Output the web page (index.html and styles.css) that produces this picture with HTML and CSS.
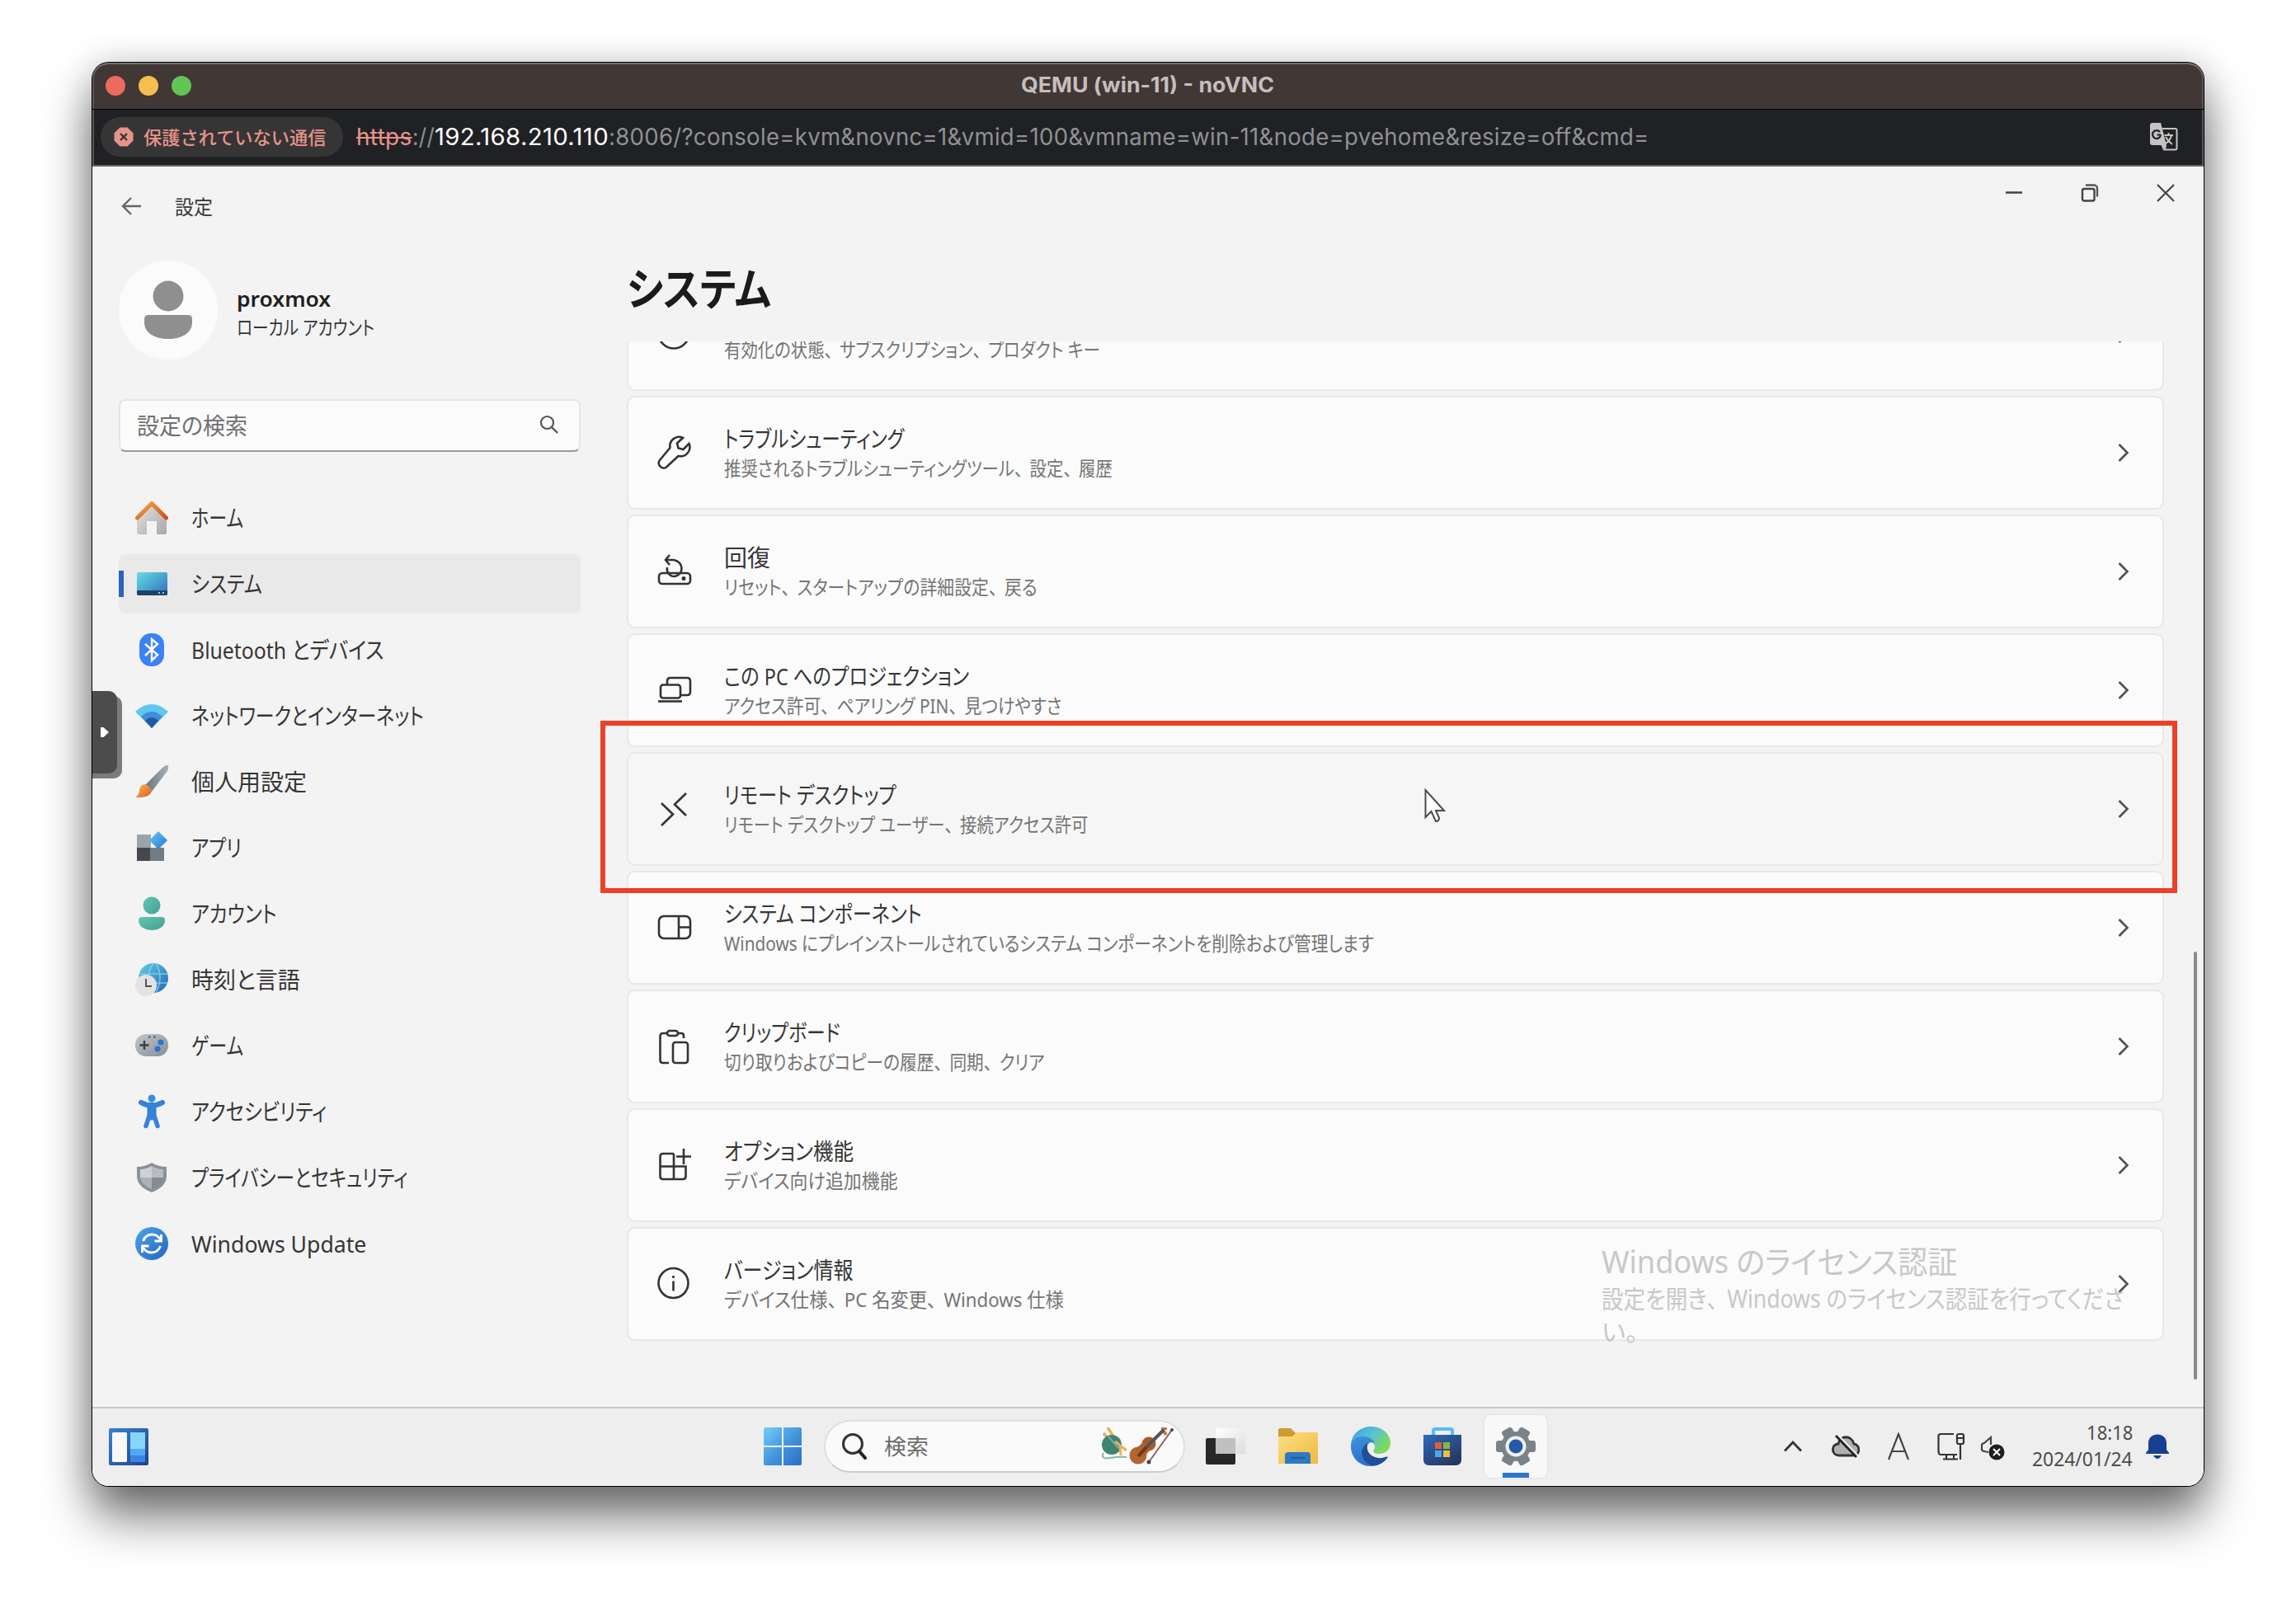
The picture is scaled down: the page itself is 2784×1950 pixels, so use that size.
FILE: index.html
```html
<!DOCTYPE html>
<html lang="ja">
<head>
<meta charset="utf-8">
<title>QEMU (win-11) - noVNC</title>
<link rel="stylesheet" href="styles.css">
</head>
<body>
<div class="window">
  <header class="titlebar">
    <span class="lights"><i class="red"></i><i class="yellow"></i><i class="green"></i></span>
    <span class="window-title"><span class="fit" data-w="307">QEMU (win-11) - noVNC</span></span>
  </header>
  <div class="address">
    <span class="warn">
      <svg width="24" height="24" viewBox="0 0 24 24"><path d="M7.5 0.5h9l7 7v9l-7 7h-9l-7-7v-9z" fill="#e8938a"/><path d="M8 8l8 8M16 8l-8 8" stroke="#353535" stroke-width="2.4"/></svg>
      <span class="fit" data-w="221">保護されていない通信</span>
    </span>
    <span class="url"><span class="seg s1"><span class="fit strike" data-w="68">https</span></span><span class="seg s2"><span class="fit" data-w="27">://</span></span><span class="seg s3"><span class="fit host" data-w="211">192.168.210.110</span></span><span class="seg"><span class="fit" data-w="1262">:8006/?console=kvm&amp;novnc=1&amp;vmid=100&amp;vmname=win-11&amp;node=pvehome&amp;resize=off&amp;cmd=</span></span></span>
    <svg class="translate" width="34" height="34" viewBox="0 0 34 34"><path d="M15 7h15.500a2 2 0 0 1 2 2v21.500a2 2 0 0 1-2 2H17l-3-7" fill="none" stroke="#c4c4c4" stroke-width="2"/><path d="M3 0h10l7 27-1 6-4-6H3a3 3 0 0 1-3-3V3a3 3 0 0 1 3-3z" fill="#c4c4c4"/><path d="M13 14.500H8.500M12 11a5 5 0 1 0 1 3.500" fill="none" stroke="#202124" stroke-width="2.200"/><path d="M17.500 15H28M22.500 12v3M26 15c-1 5-4 8-7 10M19 17c2 4 5 7 8 9" fill="none" stroke="#c4c4c4" stroke-width="2"/></svg>
  </div>

  <div class="remote">
    <section class="app">
      <div class="app-bar">
        <svg class="back" width="24" height="22" viewBox="0 0 24 22"><path d="M12 1L2 11l10 10M2 11h22" fill="none" stroke="#666" stroke-width="2.400"/></svg>
        <span class="fit app-name" data-w="46">設定</span>
        <span class="win-buttons">
          <span><svg width="22" height="22" viewBox="0 0 22 22"><path d="M1 10.500h20" stroke="#444" stroke-width="2.400"/></svg></span>
          <span><svg width="22" height="22" viewBox="0 0 22 22"><rect x="2" y="6" width="14.500" height="14.500" rx="2" fill="none" stroke="#444" stroke-width="2.400"/><path d="M6 1.500h10a4 4 0 0 1 4 4v10" fill="none" stroke="#555" stroke-width="2.400"/></svg></span>
          <span><svg width="22" height="22" viewBox="0 0 22 22"><path d="M1 1l20 20M21 1L1 21" stroke="#444" stroke-width="2.200"/></svg></span>
        </span>
      </div>
      <div class="app-body">
        <aside class="side">
          <div class="profile">
            <span class="avatar"><svg width="60" height="72" viewBox="0 0 60 72"><circle cx="30" cy="19" r="18.500" fill="#8f8f8f"/><path d="M6 42h48q5 0 5 5v4c0 13-13 20-29 20S1 64 1 51v-4q0-5 5-5z" fill="#8f8f8f"/></svg></span>
            <span class="who"><b><span class="fit" data-w="114">proxmox</span></b><small><span class="fit" data-w="167">ローカル アカウント</span></small></span>
          </div>
          <div class="search"><span class="fit" data-w="134">設定の検索</span><svg width="24" height="24" viewBox="0 0 24 24"><circle cx="9.500" cy="9.500" r="7.500" fill="none" stroke="#555" stroke-width="2.200"/><path d="M15 15l7 7" stroke="#555" stroke-width="2.400"/></svg></div>
          <nav class="nav">
            <div class="item"><svg width="40" height="42" viewBox="0 0 40 42"><defs><linearGradient id="g1" x1="0" y1="0" x2="1" y2="1"><stop offset="0" stop-color="#e4e4e4"/><stop offset="1" stop-color="#a8a8a8"/></linearGradient><linearGradient id="g2" x1="0" y1="0" x2="1" y2="1"><stop offset="0" stop-color="#f4a93d"/><stop offset="1" stop-color="#cf4d21"/></linearGradient></defs><path d="M2 20L20 4l18 16v19q0 2-2 2h-10V25H14v16H4q-2 0-2-2z" fill="url(#g1)"/><path d="M2.500 21L20 3.500 37.500 21" fill="none" stroke="url(#g2)" stroke-width="5" stroke-linecap="round" stroke-linejoin="round"/></svg><span class="fit" data-w="63">ホーム</span></div>
            <div class="item on"><svg width="40" height="42" viewBox="0 0 40 42"><defs><linearGradient id="g3" x1="0" y1="0" x2="1" y2="1"><stop offset="0" stop-color="#69dbe2"/><stop offset="1" stop-color="#2c6fbd"/></linearGradient></defs><rect x="2" y="7" width="37" height="28" rx="2" fill="url(#g3)"/><path d="M2 29h37v4q0 2-2 2H4q-2 0-2-2z" fill="#1c4565"/><path d="M28 32h2M33 32h2" stroke="#8fd0e6" stroke-width="2"/></svg><span class="fit" data-w="86">システム</span></div>
            <div class="item"><svg width="40" height="42" viewBox="0 0 40 42"><rect x="5" y="1" width="30" height="40" rx="14" fill="#3b82f6"/><path d="M12 14l15 13-7 7V8l7 6-15 14" fill="none" stroke="#fff" stroke-width="2.400"/></svg><span class="fit" data-w="234">Bluetooth とデバイス</span></div>
            <div class="item"><svg width="40" height="42" viewBox="0 0 40 42"><path d="M0 16Q20-2 40 16L20 36z" fill="#5fc6ef"/><path d="M7 22Q20 10 33 22L20 36z" fill="#3f8fd8"/><path d="M12 27Q20 19 28 27L20 36z" fill="#2459a5"/></svg><span class="fit" data-w="282">ネットワークとインターネット</span></div>
            <div class="item"><svg width="40" height="42" viewBox="0 0 40 42"><defs><linearGradient id="g4" x1="0" y1="0" x2="1" y2="0"><stop offset="0" stop-color="#6c757d"/><stop offset="1" stop-color="#a9b1b9"/></linearGradient><linearGradient id="g5" x1="0" y1="0" x2="1" y2="1"><stop offset="0" stop-color="#fbbd4a"/><stop offset="1" stop-color="#dc5a2a"/></linearGradient></defs><path d="M12 25L33 4q5-4 7-3t-1 7L20 33z" fill="url(#g4)"/><path d="M11 24q6 1 9 8-2 9-20 8 5-3 5-9 1-6 6-7z" fill="url(#g5)"/></svg><span class="fit" data-w="140">個人用設定</span></div>
            <div class="item"><svg width="40" height="42" viewBox="0 0 40 42"><defs><linearGradient id="g6" x1="0" y1="0" x2="1" y2="1"><stop offset="0" stop-color="#6bcaf5"/><stop offset="1" stop-color="#2475cf"/></linearGradient></defs><path d="M2 5h17v17H2z" fill="#9ca3ab"/><path d="M2 21h17v16H2z" fill="#45494e"/><path d="M18 21h17v16H18z" fill="#747b83"/><path d="M28 1L39 12 28 23 17 12z" fill="url(#g6)"/></svg><span class="fit" data-w="61">アプリ</span></div>
            <div class="item"><svg width="40" height="42" viewBox="0 0 40 42"><defs><linearGradient id="g7" x1="0" y1="0" x2="1" y2="1"><stop offset="0" stop-color="#60c8b4"/><stop offset="1" stop-color="#459f90"/></linearGradient></defs><circle cx="20" cy="11" r="10.500" fill="url(#g7)"/><path d="M8 25h24q4 0 4 4c0 8-8 12-16 12S4 37 4 29q0-4 4-4z" fill="url(#g7)"/></svg><span class="fit" data-w="104">アカウント</span></div>
            <div class="item"><svg width="40" height="42" viewBox="0 0 40 42"><defs><linearGradient id="g8" x1="0" y1="0" x2="1" y2="1"><stop offset="0" stop-color="#63cfe0"/><stop offset="1" stop-color="#2467ba"/></linearGradient></defs><circle cx="22" cy="19" r="18" fill="url(#g8)"/><path d="M5 14h34M8 25h31M22 1q-12 17 0 36M25 1q10 17 0 36" fill="none" stroke="#8fe0ec" stroke-width="1.500" opacity=".7"/><circle cx="13" cy="28" r="13" fill="#e2e2e5"/><path d="M13 20v9h7" fill="none" stroke="#555" stroke-width="2"/></svg><span class="fit" data-w="132">時刻と言語</span></div>
            <div class="item"><svg width="40" height="42" viewBox="0 0 40 42"><defs><linearGradient id="g9" x1="0" y1="0" x2="1" y2="1"><stop offset="0" stop-color="#c3c7cc"/><stop offset="1" stop-color="#878d96"/></linearGradient></defs><rect y="7" width="40" height="27" rx="13" fill="url(#g9)"/><path d="M11 15v11M5.500 20.500h11" stroke="#3b3f44" stroke-width="2.400"/><circle cx="31" cy="17" r="3.600" fill="#2b74cf"/><circle cx="27" cy="25" r="3.600" fill="#2b74cf"/><path d="M16 10.500h2.500M22 10.500h2.500" stroke="#555" stroke-width="2"/></svg><span class="fit" data-w="63">ゲーム</span></div>
            <div class="item"><svg width="40" height="42" viewBox="0 0 40 42"><g fill="none" stroke="#3583d6" stroke-linecap="round" stroke-linejoin="round"><path d="M7 10q13 7 26 0" stroke-width="6"/><path d="M20 15v11" stroke-width="11"/><path d="M17 26l-4 12.500M23 26l4 12.500" stroke-width="5.500"/></g><circle cx="20" cy="5" r="4.500" fill="#3a8fdc"/></svg><span class="fit" data-w="164">アクセシビリティ</span></div>
            <div class="item"><svg width="40" height="42" viewBox="0 0 40 42"><path d="M20 3q8 5 18 5v11q0 13-18 20Q2 32 2 19V8q10 0 18-5z" fill="#8b9097"/><path d="M20 7q7 4 14 4v10H20z" fill="#b8bcc2"/><path d="M20 7q-7 4-14 4v10h14z" fill="#cdd1d5"/><path d="M6 21h14v14Q7 30 6 21z" fill="#adb1b7"/><path d="M34 21H20v14q13-5 14-14z" fill="#858b93"/></svg><span class="fit" data-w="263">プライバシーとセキュリティ</span></div>
            <div class="item"><svg width="40" height="42" viewBox="0 0 40 42"><defs><linearGradient id="g10" x1="0" y1="0" x2="1" y2="1"><stop offset="0" stop-color="#4da3e2"/><stop offset="1" stop-color="#2566c8"/></linearGradient></defs><circle cx="20" cy="21" r="20" fill="url(#g10)"/><path d="M9.500 18q3-8 11-8 6 0 10 6M30.500 24q-3 8-11 8-6 0-10-6" fill="none" stroke="#fff" stroke-width="2.800"/><path d="M31.500 10v8h-8M8.500 32v-8h8" fill="none" stroke="#fff" stroke-width="2.800"/></svg><span class="fit" data-w="212">Windows Update</span></div>
          </nav>
        </aside>
        <main class="main">
          <h1><span class="fit" data-w="175">システム</span></h1>
          <div class="list">
            <div class="card first"><svg class="ic" width="44" height="44" viewBox="0 0 44 44"><circle cx="21" cy="21" r="18.500"/></svg><div class="txt"><b></b><small><span class="fit" data-w="456">有効化の状態<i>、</i>サブスクリプション<i>、</i>プロダクト キー</span></small></div><svg class="chev" width="14" height="24" viewBox="0 0 14 24"><path d="M1.500 2l10 10-10 10"/></svg></div>
            <div class="card"><svg class="ic" width="44" height="44" viewBox="0 0 44 44"><path d="M39.500 11l-7 7-6-1.500-1.500-6 7-6.500c-8-4-17 3-15.500 12L4 31c-4 5 3 12.500 8 8.500L26.500 26C36 28 43 19 39.500 11z"/></svg><div class="txt"><b><span class="fit" data-w="218">トラブルシューティング</span></b><small><span class="fit" data-w="471">推奨されるトラブルシューティングツール<i>、</i>設定<i>、</i>履歴</span></small></div><svg class="chev" width="14" height="24" viewBox="0 0 14 24"><path d="M1.500 2l10 10-10 10"/></svg></div>
            <div class="card"><svg class="ic" width="44" height="44" viewBox="0 0 44 44"><rect x="3" y="24" width="38" height="13" rx="4"/><path d="M16 2l-5 6 5 6M11 8h10c12 2 13 18 1 20-7 0-10-6-9-11"/><circle cx="33" cy="30.500" r="1.200"/></svg><div class="txt"><b><span class="fit" data-w="56">回復</span></b><small><span class="fit" data-w="380">リセット<i>、</i>スタートアップの詳細設定<i>、</i>戻る</span></small></div><svg class="chev" width="14" height="24" viewBox="0 0 14 24"><path d="M1.500 2l10 10-10 10"/></svg></div>
            <div class="card"><svg class="ic" width="44" height="44" viewBox="0 0 44 44"><path d="M13 15v-4q0-4 4-4h20q4 0 4 4v13q0 4-4 4h-7"/><rect x="5" y="15.500" width="24" height="16" rx="3"/><path d="M2 35.500h29"/></svg><div class="txt"><b><span class="fit" data-w="297">この PC へのプロジェクション</span></b><small><span class="fit" data-w="409">アクセス許可<i>、</i>ペアリング PIN<i>、</i>見つけやすさ</span></small></div><svg class="chev" width="14" height="24" viewBox="0 0 14 24"><path d="M1.500 2l10 10-10 10"/></svg></div>
            <div class="card hover"><svg class="ic" width="44" height="44" viewBox="0 0 44 44"><path d="M6 15l14 13.500L6 42M36 3L22 16.500 36 30"/></svg><div class="txt"><b><span class="fit" data-w="209">リモート デスクトップ</span></b><small><span class="fit" data-w="441">リモート デスクトップ ユーザー<i>、</i>接続アクセス許可</span></small></div><svg class="chev" width="14" height="24" viewBox="0 0 14 24"><path d="M1.500 2l10 10-10 10"/></svg></div>
            <div class="card"><svg class="ic" width="44" height="44" viewBox="0 0 44 44"><rect x="3" y="8" width="38" height="27" rx="6"/><path d="M27 8v27M27 21.500h14"/></svg><div class="txt"><b><span class="fit" data-w="240">システム コンポーネント</span></b><small><span class="fit" data-w="788">Windows にプレインストールされているシステム コンポーネントを削除および管理します</span></small></div><svg class="chev" width="14" height="24" viewBox="0 0 14 24"><path d="M1.500 2l10 10-10 10"/></svg></div>
            <div class="card"><svg class="ic" width="44" height="44" viewBox="0 0 44 44"><path d="M13 6H8Q4.500 6 4.500 9.500v29Q4.500 42 8 42h7M26 6h4q3 0 3 3v3"/><rect x="13" y="3" width="13" height="6" rx="3"/><rect x="20" y="17" width="18" height="25" rx="3"/></svg><div class="txt"><b><span class="fit" data-w="141">クリップボード</span></b><small><span class="fit" data-w="389">切り取りおよびコピーの履歴<i>、</i>同期<i>、</i>クリア</span></small></div><svg class="chev" width="14" height="24" viewBox="0 0 14 24"><path d="M1.500 2l10 10-10 10"/></svg></div>
            <div class="card"><svg class="ic" width="44" height="44" viewBox="0 0 44 44"><path d="M21 8H8Q4.500 8 4.500 11.500v24Q4.500 39 8 39h24q3.500 0 3.500-3.500V23.500h-31M21 8v31M33 2v19M24 11.500h18"/></svg><div class="txt"><b><span class="fit" data-w="157">オプション機能</span></b><small><span class="fit" data-w="211">デバイス向け追加機能</span></small></div><svg class="chev" width="14" height="24" viewBox="0 0 14 24"><path d="M1.500 2l10 10-10 10"/></svg></div>
            <div class="card"><svg class="ic" width="44" height="44" viewBox="0 0 44 44"><circle cx="20.500" cy="21" r="18"/><path d="M20.500 18.500v12M20.500 12v3"/></svg><div class="txt"><b><span class="fit" data-w="157">バージョン情報</span></b><small><span class="fit" data-w="412">デバイス仕様<i>、</i>PC 名変更<i>、</i>Windows 仕様</span></small></div><svg class="chev" width="14" height="24" viewBox="0 0 14 24"><path d="M1.500 2l10 10-10 10"/></svg></div>
          </div>
        </main>
      </div>
      <i class="scrollbar"></i>
    </section>

    <footer class="taskbar">
      <svg class="widgets" width="48" height="45" viewBox="0 0 48 45"><defs><linearGradient id="wd" x1="0" y1="0" x2="1" y2="1"><stop offset="0" stop-color="#3a80d8"/><stop offset="1" stop-color="#1f4485"/></linearGradient></defs><rect width="48" height="45" rx="2" fill="url(#wd)"/><rect x="4" y="5" width="18" height="36" rx="1.500" fill="#f8f8f8"/><path d="M26 5h18v20H26z" fill="#85d6fb"/><path d="M26 25h18v8H26z" fill="#53a8f7"/><path d="M26 33h18v8H26z" fill="#3a84e6"/></svg>
      <div class="dock">
        <svg class="start" width="46" height="46" viewBox="0 0 46 46"><defs><linearGradient id="w" gradientUnits="userSpaceOnUse" x1="0" y1="0" x2="46" y2="46"><stop offset="0" stop-color="#72cff8"/><stop offset=".5" stop-color="#4597dc"/><stop offset="1" stop-color="#2a6cc9"/></linearGradient></defs><path fill="url(#w)" d="M2 0h20v22H0V2q0-2 2-2zM24 0h20q2 0 2 2v20H24zM0 24h22v22H2q-2 0-2-2zM24 24h22v20q0 2-2 2H24z"/></svg>
        <div class="pill">
          <svg width="30" height="32" viewBox="0 0 30 32"><circle cx="13" cy="13" r="11.500" fill="none" stroke="#333" stroke-width="3"/><path d="M21 22l7 8" stroke="#222" stroke-width="4" stroke-linecap="round"/></svg>
          <span class="fit query" data-w="54">検索</span>
          <svg class="art" width="90" height="46" viewBox="0 0 90 46"><path d="M8 0l9 14M3 7l9 10" stroke="#efad5b" stroke-width="3.500"/><circle cx="13" cy="21" r="12" fill="#3e8472"/><path d="M9 11l12 14" stroke="#6fb09c" stroke-width="2"/><path d="M17 17l14 11M23 22l1 12" stroke="#efad5b" stroke-width="3"/><path d="M3 31q-4 8 8 6t20-1" fill="none" stroke="#84b8aa" stroke-width="2"/><path d="M73 1h7M75 3l4 6" stroke="#c5714b" stroke-width="4"/><circle cx="45" cy="34" r="10.500" fill="#b36532"/><circle cx="58" cy="20" r="8.500" fill="#a85a2a"/><path d="M41 27l10-9 9 9-8 9z" fill="#ae602e"/><path d="M45 35l12-13" stroke="#6f3517" stroke-width="4"/><path d="M55 24L76 3" stroke="#555" stroke-width="4"/><path d="M58 42L86 3" stroke="#8b6258" stroke-width="2"/><circle cx="58" cy="42" r="2.500" fill="#4f4248"/><circle cx="86" cy="3" r="2" fill="#4f4248"/></svg>
        </div>
        <svg class="taskview" width="50" height="46" viewBox="0 0 50 46"><defs><linearGradient id="tv" x1="0" y1="0" x2="1" y2="1"><stop offset="0" stop-color="#fff"/><stop offset="1" stop-color="#ddd"/></linearGradient></defs><rect y="13" width="36" height="32" rx="2" fill="#272727"/><rect x="12" y="1" width="36" height="31" rx="1" fill="url(#tv)"/><rect x="12" y="13" width="24" height="19" fill="#c0c0c0"/></svg>
        <svg class="folder" width="48" height="46" viewBox="0 0 48 46"><defs><linearGradient id="fo" x1="0" y1="0" x2="1" y2="1"><stop offset="0" stop-color="#fbdf83"/><stop offset="1" stop-color="#efb93d"/></linearGradient></defs><path d="M2 1h13l6 6v8H0V3q0-2 2-2z" fill="#d19a32"/><path d="M0 11h17l5-5h24q2 0 2 2v36H0z" fill="url(#fo)"/><path d="M8 44V34q0-4 4-4h23q4 0 4 4v10z" fill="#2e79c4"/><path d="M15 37h17" stroke="#2262a8" stroke-width="3"/></svg>
        <svg class="edge" width="48" height="48" viewBox="0 0 48 48"><defs><linearGradient id="e1" x1="0" y1="0" x2="1" y2=".6"><stop offset="0" stop-color="#3aa0e8"/><stop offset=".55" stop-color="#5cc3d0"/><stop offset="1" stop-color="#80dc55"/></linearGradient><linearGradient id="e2" x1="0" y1="0" x2=".4" y2="1"><stop offset="0" stop-color="#3d94dc"/><stop offset="1" stop-color="#2b6dcb"/></linearGradient></defs><path d="M0 22C1 8 12 0 25 0c14 0 23 10 23 20 0 9-7 13-14 13-5 0-8-2-6-5 3-4 0-10-5-9z" fill="url(#e1)"/><path d="M0 24C0 16 7 12 14 12c8 0 14 4 15 9-5-5-11 0-9 8 2 9 11 13 21 11-4 5-10 8-17 8C10 48 0 37 0 24z" fill="url(#e2)"/><path d="M20 20c-7 5-9 13-4 20 4 7 12 9 18 6 5-2 9-6 11-9-1-2-6 2-12 1-10-1-15-9-13-18z" fill="#224f94"/></svg>
        <svg class="store" width="46" height="46" viewBox="0 0 46 46"><defs><linearGradient id="st" x1="0" y1="0" x2=".7" y2="1"><stop offset="0" stop-color="#2d6abb"/><stop offset="1" stop-color="#27375f"/></linearGradient></defs><path d="M12 12V4q0-2 2-2h19q2 0 2 2v8" fill="none" stroke="#56bdf5" stroke-width="4"/><path d="M0 9h46v30q0 7-7 7H7q-7 0-7-7z" fill="url(#st)"/><path d="M14 18h8v8h-8z" fill="#e35b35"/><path d="M24 18h8v8h-8z" fill="#83b93b"/><path d="M14 28h8v8h-8z" fill="#4ca6ea"/><path d="M24 28h8v8h-8z" fill="#f5bc42"/></svg>
        <div class="active-app"><svg width="48" height="48" viewBox="0 0 48 48"><g fill="#7a8289"><circle cx="24" cy="24" r="18"/><rect x="17" y="0" width="14" height="48" rx="3" transform="rotate(30 24 24)"/><rect x="17" y="0" width="14" height="48" rx="3" transform="rotate(90 24 24)"/><rect x="17" y="0" width="14" height="48" rx="3" transform="rotate(150 24 24)"/></g><circle cx="24" cy="24" r="12.500" fill="#f0f2f4"/><circle cx="24" cy="24" r="8.500" fill="#2459a8"/></svg></div>
      </div>
      <div class="tray">
        <svg class="t-caret" width="22" height="14" viewBox="0 0 22 14"><path d="M1 12.500L11 2l10 10.500" fill="none" stroke="#333" stroke-width="2.800"/></svg>
        <svg class="t-cloud" width="34" height="30" viewBox="0 0 34 30"><path d="M9 26c-10 0-10-14-1-14 2-11 16-11 19 0 8 1 8 14-1 14z" fill="#b0b0b0" stroke="#333" stroke-width="2.800"/><path d="M7 1l25 26" stroke="#eee" stroke-width="3"/><path d="M5 2l25 26" stroke="#222" stroke-width="2.800"/></svg>
        <svg class="t-a" width="26" height="34" viewBox="0 0 26 34"><path d="M1 33L13 2l12 31M5 23h16" fill="none" stroke="#444" stroke-width="2.200"/></svg>
        <svg class="t-net" width="34" height="34" viewBox="0 0 34 34"><path d="M20 2H4Q1.500 2 1.500 5v18q0 4 3 4H24M11 27v5M20 27v5M7 32.500h18M28 14v19" fill="none" stroke="#333" stroke-width="2.200"/><rect x="24" y="2" width="8" height="12" rx="2" fill="none" stroke="#333" stroke-width="2.200"/><path d="M24 7h8" stroke="#333" stroke-width="2"/></svg>
        <svg class="t-vol" width="30" height="30" viewBox="0 0 30 30"><path d="M10 20L5 19Q2 19 2 16v-4q0-3 3-3l8-7v9" fill="none" stroke="#444" stroke-width="2.200"/><circle cx="20" cy="20" r="9.500" fill="#1e1e1e"/><path d="M16 16l8 8M24 16l-8 8" stroke="#fff" stroke-width="2"/></svg>
        <div class="clock"><span><span class="fit right" data-w="56">18:18</span></span><span><span class="fit right" data-w="122">2024/01/24</span></span></div>
        <svg class="t-bell" width="28" height="30" viewBox="0 0 28 30"><path d="M3 11C3-3 25-3 25 11v8l3 4v1H0v-1l3-4zM9 26h10q-5 8-10 0z" fill="#173f92"/></svg>
      </div>
    </footer>

    <div class="watermark"><p class="w1"><span class="fit" data-w="431">Windows のライセンス認証</span></p><p><span class="fit" data-w="633">設定を開き<i>、</i>Windows のライセンス認証を行ってくださ</span></p><p><span class="fit" data-w="44">い。</span></p></div>
    <div class="handle"><i></i></div>
    <div class="marker"></div>
    <svg class="cursor" width="26" height="42" viewBox="0 0 26 42"><path d="M1.500 2v33l7-7 5.500 12q4 0 4-4l-4-9h10z" fill="#fff" stroke="#4a4a50" stroke-width="2"/></svg>
  </div>
</div>
<script src="fit.js"></script>
</body>
</html>
```
FILE: styles.css
```css
* { box-sizing: border-box; }
html { background: #fff; }
body {
  margin: 0;
  width: 2784px;
  height: 1950px;
  padding: 76px 112px;
  overflow: hidden;
  font-family: "Noto Sans", "Noto Sans CJK JP", sans-serif;
  font-size: 28px;
  font-feature-settings: "palt";
  color: #363636;
}
svg { display: block; flex: none; }
.fit { display: inline-block; white-space: nowrap; transform-origin: 0 50%; }
.fit.right { transform-origin: 100% 50%; }
/* the ideographic comma keeps its full advance */
.fit i { font-style: normal; font-feature-settings: normal; margin-right: -2px; }

.window {
  width: 2560px;
  height: 1726px;
  border-radius: 20px;
  background: #202124;
  display: flex;
  flex-direction: column;
  position: relative;
  box-shadow: 0 0 0 1px #000, 0 36px 60px rgba(0, 0, 0, .58), 0 0 40px rgba(0, 0, 0, .16);
}
.titlebar {
  height: 57px;
  background: #413735;
  border-bottom: 1px solid #000;
  border-radius: 20px 20px 0 0;
  box-shadow: inset 0 2px 0 #77706d, inset 2px 0 0 #5d5553, inset -2px 0 0 #5d5553;
  display: grid;
  grid-template-columns: 400px 1fr 400px;
  align-items: center;
}
.lights { display: flex; gap: 16px; padding-left: 16px; }
.lights i { width: 24px; height: 24px; border-radius: 50%; }
.red { background: #ec6a5e; }
.yellow { background: #f4bf4f; }
.green { background: #61c554; }
.window-title {
  font: 700 25px/54px Inter, sans-serif;
  color: #c5bfbd;
  padding-left: 726px;
  height: 56px;
}
.address {
  height: 69px;
  border-bottom: 2px solid #666;
  box-shadow: inset 2px 0 0 #55565a, inset -2px 0 0 #55565a;
  display: flex;
  align-items: center;
  padding: 0 31px 2px 10px;
}
.warn {
  width: 294px;
  height: 48px;
  border-radius: 24px;
  background: #353535;
  color: #e8938a;
  display: flex;
  align-items: center;
  gap: 12px;
  padding-left: 16px;
  font: 500 22px/46px "Noto Sans CJK JP", sans-serif;
}
.warn .fit { padding-bottom: 2px; }
.url { display: flex; margin-left: 16px; font: 400 28px/48px Inter, sans-serif; color: #8f9194; flex: 1; letter-spacing: .3px; }
.seg { width: 100px; flex: none; }
.s1 { width: 68px; }
.s2 { width: 27px; }
.s3 { width: 211px; }
.strike { color: #e8938a; text-decoration: line-through; text-decoration-thickness: 2px; }
.host { color: #fff; }

.remote {
  height: 1600px;
  position: relative;
  background: #f3f3f3;
  border-radius: 0 0 20px 20px;
  overflow: hidden;
  display: flex;
  flex-direction: column;
}
.app { height: 1504px; position: relative; display: flex; flex-direction: column; }
.app-bar { height: 96px; display: flex; align-items: center; padding-left: 35px; }
.app-name { font-size: 24px; margin-left: 41px; padding-bottom: 1px; }
.win-buttons { display: flex; margin-left: auto; align-self: flex-start; }
.win-buttons span { width: 92px; height: 64px; display: grid; place-items: center; }
.app-body { flex: 1; min-height: 0; display: flex; gap: 56px; padding: 0 48px 0 32px; }

.side { width: 560px; padding-top: 18px; display: flex; flex-direction: column; }
.profile { display: flex; gap: 23px; height: 120px; }
.avatar { width: 120px; height: 120px; border-radius: 50%; background: #fbfbfb; display: grid; place-items: center; }
.who { display: flex; flex-direction: column; padding-top: 29px; }
.who b { font-weight: 600; font-size: 26px; line-height: 34px; color: #1f1f1f; }
.who small { font-size: 24px; line-height: 36px; }
.search {
  height: 64px;
  margin-top: 48px;
  border: 2px solid #e6e6e6;
  border-bottom-color: #999;
  border-radius: 8px;
  background: #fbfbfb;
  display: flex;
  align-items: center;
  justify-content: space-between;
  padding: 0 24px 2px 20px;
  color: #707070;
}
.nav { margin-top: 44px; display: flex; flex-direction: column; gap: 8px; }
.item { height: 72px; border-radius: 8px; display: flex; align-items: center; gap: 28px; padding-left: 20px; line-height: 40px; }
.item.on { background: linear-gradient(#2a63c0, #2a63c0) 0 50% / 6px 32px no-repeat #e9e9e9; }

.main { flex: 1; min-width: 0; display: flex; flex-direction: column; }
h1 { margin: 0; height: 116px; font-size: 54px; line-height: 104px; font-weight: 700; color: #1b1b1b; flex: none; }
.list { flex: 1; min-height: 0; overflow: hidden; display: flex; flex-direction: column; gap: 6px; }
.card {
  height: 138px;
  flex: none;
  border: 2px solid #e8e8e8;
  border-radius: 10px;
  background: #fbfbfb;
  display: flex;
  align-items: center;
  padding: 0 40px 0 34px;
}
.card.first { margin-top: -78px; }
.card.hover { background: #f6f6f6; }
.ic { fill: none; stroke: #333; stroke-width: 2.6; }
.txt { display: flex; flex-direction: column; margin-left: 38px; flex: 1; }
.txt b { font-weight: 400; font-size: 28px; line-height: 38px; height: 37px; }
.txt small { font-size: 24px; line-height: 36px; color: #757575; }
.chev { fill: none; stroke: #505050; stroke-width: 2.6; }
.scrollbar { position: absolute; left: 2548px; top: 952px; width: 4px; height: 519px; border-radius: 2px; background: #8a8a8a; }

.taskbar {
  height: 96px;
  border-top: 2px solid #c8c8c8;
  background: #eee;
  display: flex;
  align-items: center;
  padding: 0 0 2px 20px;
}
.widgets { margin-right: 746px; }
.dock { display: flex; align-items: center; }
.pill {
  width: 438px;
  height: 64px;
  margin: 0 25px 0 27px;
  border: 2px solid #e0e0e0;
  border-bottom-color: #ccc;
  border-radius: 32px;
  background: #fafafa;
  display: flex;
  align-items: center;
  gap: 21px;
  padding: 0 10px 0 20px;
  font-size: 26px;
  color: #6c6c6c;
}
.query { padding-bottom: 3px; }
.art { margin-left: auto; }
.folder { margin-left: 38px; }
.edge { margin-left: 40px; }
.store { margin-left: 40px; }
.active-app {
  width: 76px;
  height: 76px;
  margin-left: 28px;
  border-radius: 8px;
  background: linear-gradient(#2e75d0, #2e75d0) 50% 100% / 32px 6px no-repeat #f8f8f8;
  box-shadow: 0 0 2px #ccc;
  display: grid;
  place-items: center;
}
.tray { display: flex; align-items: center; margin-left: 287px; }
.t-cloud { margin-left: 36px; }
.t-a { margin-left: 34px; }
.t-net { margin-left: 34px; }
.t-vol { margin-left: 18px; margin-top: 3px; }
.clock { width: 155px; font-size: 24px; line-height: 32px; display: flex; flex-direction: column; text-align: right; color: #4c4c4c; padding-bottom: 2px; }
.t-bell { margin-left: 16px; }

.watermark { position: absolute; left: 1830px; top: 1301px; color: #c8c8c8; font-size: 30px; line-height: 40px; }
.watermark p { margin: 0; }
.watermark .w1 { font-size: 38px; line-height: 52px; }
.handle {
  position: absolute;
  left: 0;
  top: 636px;
  width: 30px;
  height: 100px;
  border-radius: 0 10px 10px 0;
  background: #4c4c4c;
  box-shadow: 6px 6px 0 #7b7b7b, 0 6px 0 #7b7b7b;
}
.handle i { position: absolute; left: 10px; top: 44px; width: 10px; height: 12px; background: #fff; clip-path: polygon(0 0, 35% 0, 100% 50%, 35% 100%, 0 100%); }
.marker { position: absolute; left: 616px; top: 672px; width: 1912px; height: 209px; border: 6px solid #ec4127; }
.cursor { position: absolute; left: 1615px; top: 754px; }
```
FILE: fit.js
```js
document.fonts.ready.then(function () {
  document.querySelectorAll('.fit').forEach(function (el) {
    var natural = el.offsetWidth;
    var wanted = parseFloat(el.dataset.w);
    el.style.transform = 'scaleX(' + (wanted / natural).toFixed(4) + ')';
  });
});
```
